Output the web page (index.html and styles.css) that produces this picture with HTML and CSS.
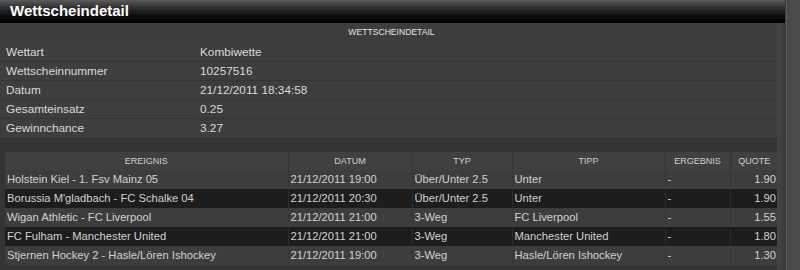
FILE: index.html
```html
<!DOCTYPE html>
<html>
<head>
<meta charset="utf-8">
<link rel="stylesheet" href="styles.css">
</head>
<body>
<div class="page">
  <div class="main">
    <div class="title">Wettscheindetail</div>
    <div class="body">
      <div class="content">
        <table class="info">
          <caption>WETTSCHEINDETAIL</caption>
          <tr><td class="lbl">Wettart</td><td>Kombiwette</td></tr>
          <tr><td class="lbl">Wettscheinnummer</td><td>10257516</td></tr>
          <tr><td class="lbl">Datum</td><td>21/12/2011 18:34:58</td></tr>
          <tr><td class="lbl">Gesamteinsatz</td><td>0.25</td></tr>
          <tr><td class="lbl">Gewinnchance</td><td>3.27</td></tr>
        </table>
        <table class="bets">
          <colgroup>
            <col class="c-ev"><col class="c-dt"><col class="c-ty"><col class="c-ti"><col class="c-er"><col class="c-qu">
          </colgroup>
          <thead>
            <tr><th>EREIGNIS</th><th>DATUM</th><th>TYP</th><th>TIPP</th><th>ERGEBNIS</th><th>QUOTE</th></tr>
          </thead>
          <tbody>
            <tr><td>Holstein Kiel - 1. Fsv Mainz 05</td><td>21/12/2011 19:00</td><td>Über/Unter 2.5</td><td>Unter</td><td>-</td><td class="q">1.90</td></tr>
            <tr><td>Borussia M'gladbach - FC Schalke 04</td><td>21/12/2011 20:30</td><td>Über/Unter 2.5</td><td>Unter</td><td>-</td><td class="q">1.90</td></tr>
            <tr><td>Wigan Athletic - FC Liverpool</td><td>21/12/2011 21:00</td><td>3-Weg</td><td>FC Liverpool</td><td>-</td><td class="q">1.55</td></tr>
            <tr><td>FC Fulham - Manchester United</td><td>21/12/2011 21:00</td><td>3-Weg</td><td>Manchester United</td><td>-</td><td class="q">1.80</td></tr>
            <tr><td>Stjernen Hockey 2 - Hasle/Lören Ishockey</td><td>21/12/2011 19:00</td><td>3-Weg</td><td>Hasle/Lören Ishockey</td><td>-</td><td class="q">1.30</td></tr>
          </tbody>
        </table>
      </div>
      <div class="edge"></div>
    </div>
  </div>
  <div class="scroll"></div>
</div>
</body>
</html>
```
FILE: styles.css
```css
html, body {
  margin: 0;
  padding: 0;
  background: #333333;
}
body {
  font-family: "Liberation Sans", Arial, sans-serif;
  width: 800px;
  height: 270px;
  overflow: hidden;
}
.page {
  display: flex;
  height: 270px;
}
.main {
  width: 785px;
  display: flex;
  flex-direction: column;
  background: #343434;
}
.title {
  height: 23px;
  box-sizing: border-box;
  padding: 2px 0 0 10px;
  font-size: 15px;
  font-weight: bold;
  color: #ffffff;
  line-height: 17px;
  background: linear-gradient(to bottom, #5a5a5a 0%, #2e2e2e 35%, #0c0c0c 70%, #000000 100%);
}
.body {
  flex: 1;
  display: flex;
}
.content {
  width: 777px;
}
.edge {
  width: 8px;
  background: linear-gradient(to right, #454545, #3a3a3a);
}
.info {
  width: 777px;
  border-collapse: collapse;
  background: #3d3d3d;
  color: #dadada;
  font-size: 11.8px;
  table-layout: fixed;
}
.info caption {
  background: #3d3d3d;
  height: 19px;
  line-height: 19px;
  font-size: 8.6px;
  color: #e6e6e6;
  text-align: center;
  padding-left: 6px;
  box-sizing: border-box;
}
.info td {
  height: 19px;
  padding: 0 0 0 2px;
  border-top: 1px solid #353535;
  line-height: 18px;
  box-sizing: border-box;
}
.info tr:first-of-type td {
  border-top-color: #3a3a3a;
}
.info td.lbl {
  width: 198px;
  padding-left: 6px;
  background: #3e3e3e;
}
.bets {
  margin: 14px 0 0 5px;
  width: 773px;
  border-collapse: collapse;
  table-layout: fixed;
  font-size: 11.2px;
  color: #d2d2d2;
}
.c-ev { width: 283px; }
.c-dt { width: 124px; }
.c-ty { width: 100px; }
.c-ti { width: 153px; }
.c-er { width: 65px; }
.c-qu { width: 48px; }
.bets th {
  height: 18px;
  padding: 0;
  font-size: 9px;
  font-weight: normal;
  color: #d0d0d0;
  background: #404040;
  border-left: 1px solid #363636;
  text-align: center;
}
.bets th:first-child,
.bets td:first-child {
  border-left: none;
}
.bets td {
  height: 19px;
  padding: 0 0 0 2px;
  line-height: 19px;
  white-space: nowrap;
  overflow: hidden;
  border-left: 1px solid #363636;
}
.bets tbody tr:nth-child(odd) td {
  background: #3d3d3d;
}
.bets tbody tr:nth-child(even) td {
  background: #1d1d1d;
  border-left-color: #2c2c2c;
}
.bets td.q {
  text-align: right;
  padding: 0 2px 0 0;
}
.scroll {
  width: 15px;
  box-sizing: border-box;
  border-left: 1px solid #3a3a3a;
  background: linear-gradient(to right, #5e5e5e 0, #5e5e5e 1px, #444444 1px, #4a4a4a 4px, #4a4a4a 100%);
}
```
